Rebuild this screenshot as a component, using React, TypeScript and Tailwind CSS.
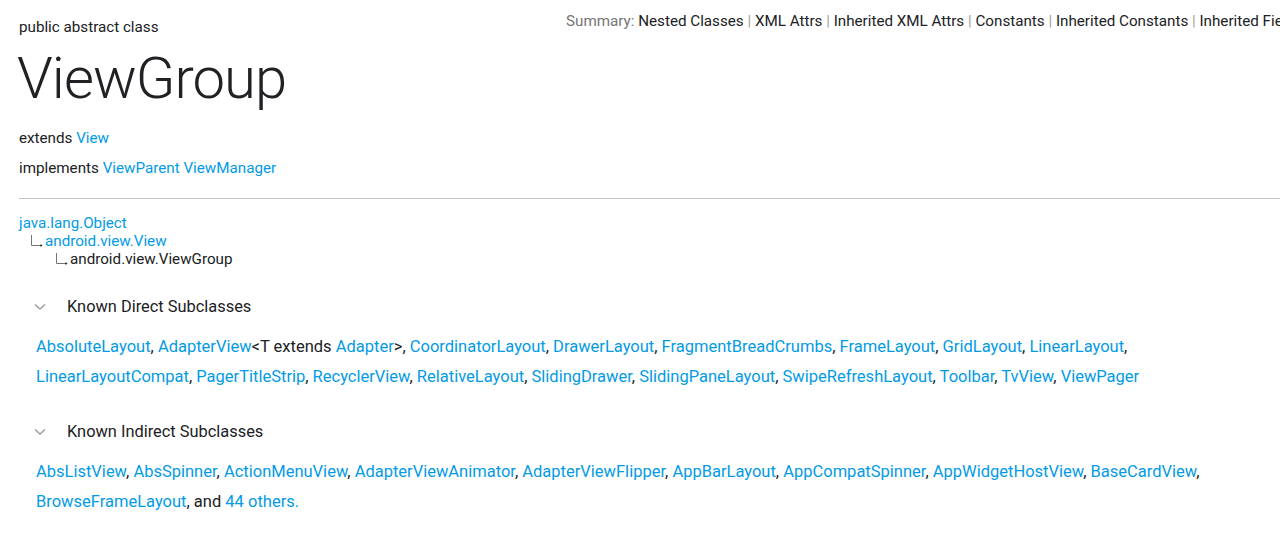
import React from "react";

const L = ({ children }: { children: React.ReactNode }) => (
  <a className="text-[#039be5] no-underline">{children}</a>
);

const Tree = () => (
  <svg width="14" height="12" viewBox="0 0 14 12" className="inline-block mr-[1px] align-[-1px]">
    <path d="M1.5 0 V10.5 H11" stroke="#757575" strokeWidth="1" fill="none" />
    <path d="M10.5 9 L12.5 10.5 L10.5 12 Z" fill="#202124" />
  </svg>
);

const Chevron = () => (
  <svg width="14" height="10" viewBox="0 0 14 10" className="block">
    <path d="M2 2.5 L7 7 L12 2.5" stroke="#9e9e9e" strokeWidth="1.6" fill="none" />
  </svg>
);

function List({ items, tail }: { items: string[]; tail?: React.ReactNode }) {
  return (
    <p className="pl-[36px] pr-[40px] text-[16.5px] leading-[30px] text-[#202124]">
      {items.map((it, i) => (
        <React.Fragment key={i}>
          {it === "AdapterView" ? (
            <>
              <L>AdapterView</L>&lt;T extends <L>Adapter</L>&gt;
            </>
          ) : (
            <L>{it}</L>
          )}
          {i < items.length - 1 || tail ? ", " : ""}
        </React.Fragment>
      ))}
      {tail}
    </p>
  );
}

export default function App() {
  const summary = [
    "Nested Classes",
    "XML Attrs",
    "Inherited XML Attrs",
    "Constants",
    "Inherited Constants",
    "Inherited Fields",
    "Ctors",
    "Methods",
  ];
  const direct = [
    "AbsoluteLayout",
    "AdapterView",
    "CoordinatorLayout",
    "DrawerLayout",
    "FragmentBreadCrumbs",
    "FrameLayout",
    "GridLayout",
    "LinearLayout",
    "LinearLayoutCompat",
    "PagerTitleStrip",
    "RecyclerView",
    "RelativeLayout",
    "SlidingDrawer",
    "SlidingPaneLayout",
    "SwipeRefreshLayout",
    "Toolbar",
    "TvView",
    "ViewPager",
  ];
  const indirect = [
    "AbsListView",
    "AbsSpinner",
    "ActionMenuView",
    "AdapterViewAnimator",
    "AdapterViewFlipper",
    "AppBarLayout",
    "AppCompatSpinner",
    "AppWidgetHostView",
    "BaseCardView",
    "BrowseFrameLayout",
  ];
  return (
    <div
      className="w-[1280px] h-[537px] overflow-hidden bg-white text-[#202124]"
      style={{ fontFamily: "Roboto, 'Noto Sans', sans-serif" }}
    >
      <div className="flex">
        <div className="w-[566px] shrink-0 pl-[19px] pt-[17px]">
          <div className="text-[15.2px] leading-[20px]">public abstract class</div>
          <h1 className="text-[58px] leading-[64px] font-light tracking-[-0.95px] mt-[9px] ml-[-2px]">ViewGroup</h1>
        </div>
        <div className="pt-[11px] whitespace-nowrap text-[15.2px] leading-[20px] shrink-0">
          <span className="text-[#757575]">Summary: </span>
          {summary.map((s, i) => (
            <React.Fragment key={s}>
              <span className="text-[#202124]">{s}</span>
              {i < summary.length - 1 && <span className="text-[#9e9e9e]"> | </span>}
            </React.Fragment>
          ))}
        </div>
      </div>

      <div className="pl-[19px] mt-[18px] text-[15.2px] leading-[20px]">
        <div>
          extends <L>View</L>
        </div>
        <div className="mt-[10px]">
          implements <L>ViewParent</L> <L>ViewManager</L>
        </div>
      </div>

      <div className="ml-[19px] mt-[20px] border-t border-[#c6c6c6]" />

      <div className="pl-[19px] mt-[15px] text-[15.2px] leading-[18px]">
        <div>
          <L>java.lang.Object</L>
        </div>
        <div className="pl-[11px]">
          <Tree />
          <L>android.view.View</L>
        </div>
        <div className="pl-[36px]">
          <Tree />
          android.view.ViewGroup
        </div>
      </div>

      <div className="flex items-center pl-[33px] mt-[27px] h-[24px]">
        <Chevron />
        <span className="ml-[20px] text-[16.4px]">Known Direct Subclasses</span>
      </div>
      <div className="mt-[13px]">
        <List items={direct} />
      </div>

      <div className="flex items-center pl-[33px] mt-[28px] h-[24px]">
        <Chevron />
        <span className="ml-[20px] text-[16.4px]">Known Indirect Subclasses</span>
      </div>
      <div className="mt-[13px]">
        <List
          items={indirect}
          tail={
            <>
              and <L>44 others.</L>
            </>
          }
        />
      </div>
    </div>
  );
}
